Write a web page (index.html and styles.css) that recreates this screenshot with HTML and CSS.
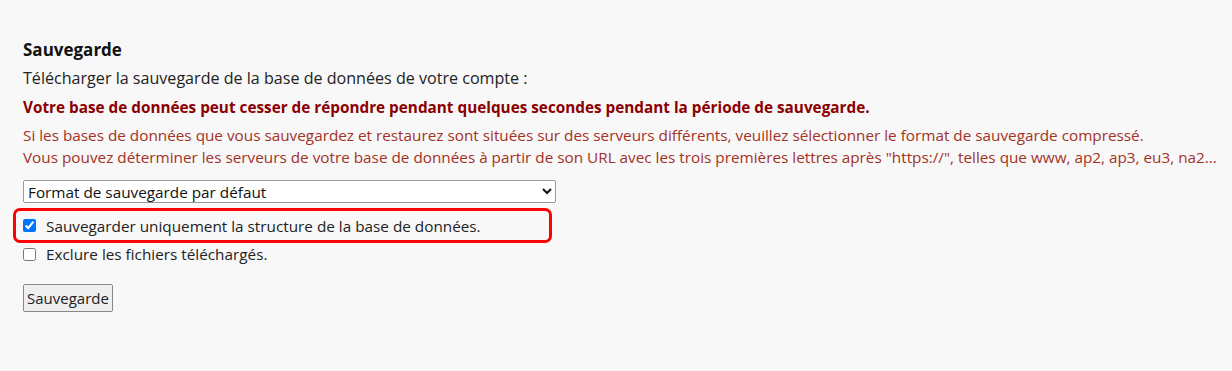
FILE: index.html
```html
<!DOCTYPE html>
<html lang="fr">
<head>
  <meta charset="UTF-8" />
  <title>Sauvegarde</title>
  <link rel="stylesheet" href="styles.css">
</head>
<body>
  <div class="backup">
    <h2 class="backup-title">Sauvegarde</h2>
    <p class="intro">Télécharger la sauvegarde de la base de données de votre compte :</p>
    <p class="warning">Votre base de données peut cesser de répondre pendant quelques secondes pendant la période de sauvegarde.</p>
    <p class="note">Si les bases de données que vous sauvegardez et restaurez sont situées sur des serveurs différents, veuillez sélectionner le format de sauvegarde compressé.<br>Vous pouvez déterminer les serveurs de votre base de données à partir de son URL avec les trois premières lettres après "https://", telles que www, ap2, ap3, eu3, na2...</p>

    <select class="format-select">
      <option>Format de sauvegarde par défaut</option>
      <option>Format de sauvegarde compressé</option>
    </select>

    <div class="options">
      <label class="option highlighted"><input type="checkbox" checked> Sauvegarder uniquement la structure de la base de données.</label>
      <label class="option"><input type="checkbox"> Exclure les fichiers téléchargés.</label>
    </div>

    <button class="save-btn">Sauvegarde</button>
  </div>
</body>
</html>
```

FILE: styles.css
```css
body {
  margin: 0;
  background: #f8f8f8;
  color: #222;
  font-family: "Open Sans", Arial, sans-serif;
  font-size: 15.3px;
}

.backup {
  padding: 38px 23px 20px;
}

.backup-title {
  font-size: 17px;
  font-weight: bold;
  margin: 0 0 6px;
  color: #111;
}

.backup p {
  margin: 0;
  line-height: 22px;
}

.intro {
  font-size: 16.1px;
  margin-bottom: 7px !important;
}

.warning {
  color: #8b0000;
  font-weight: bold;
  margin-bottom: 6px !important;
}

.note {
  color: #a33125;
  white-space: nowrap;
}

.format-select {
  display: block;
  margin-top: 12px;
  width: 533px;
  height: 23px;
  font-family: "Open Sans", Arial, sans-serif;
  font-size: 15.3px;
  color: #111;
  background: #fff;
  border: 1px solid #999;
  border-radius: 2px;
}

.options {
  margin-top: 5px;
  display: flex;
  flex-direction: column;
}

.option {
  display: flex;
  align-items: center;
  gap: 6px;
  line-height: 22px;
  color: #222;
}

.option input {
  margin: 0 4px 0 0;
  width: 13px;
  height: 13px;
}

.highlighted {
  box-sizing: border-box;
  margin-left: -10px;
  padding: 3px 0 3px 7px;
  width: 539px;
  height: 35px;
  border: 3px solid #f00;
  border-radius: 7px;
}

.save-btn {
  margin-top: 19px;
  font-family: "Open Sans", Arial, sans-serif;
  font-size: 15px;
  padding: 2px 3px;
  height: 28px;
  color: #222;
  background: #efefef;
  border: 1px solid #888;
  border-radius: 2px;
}
```
